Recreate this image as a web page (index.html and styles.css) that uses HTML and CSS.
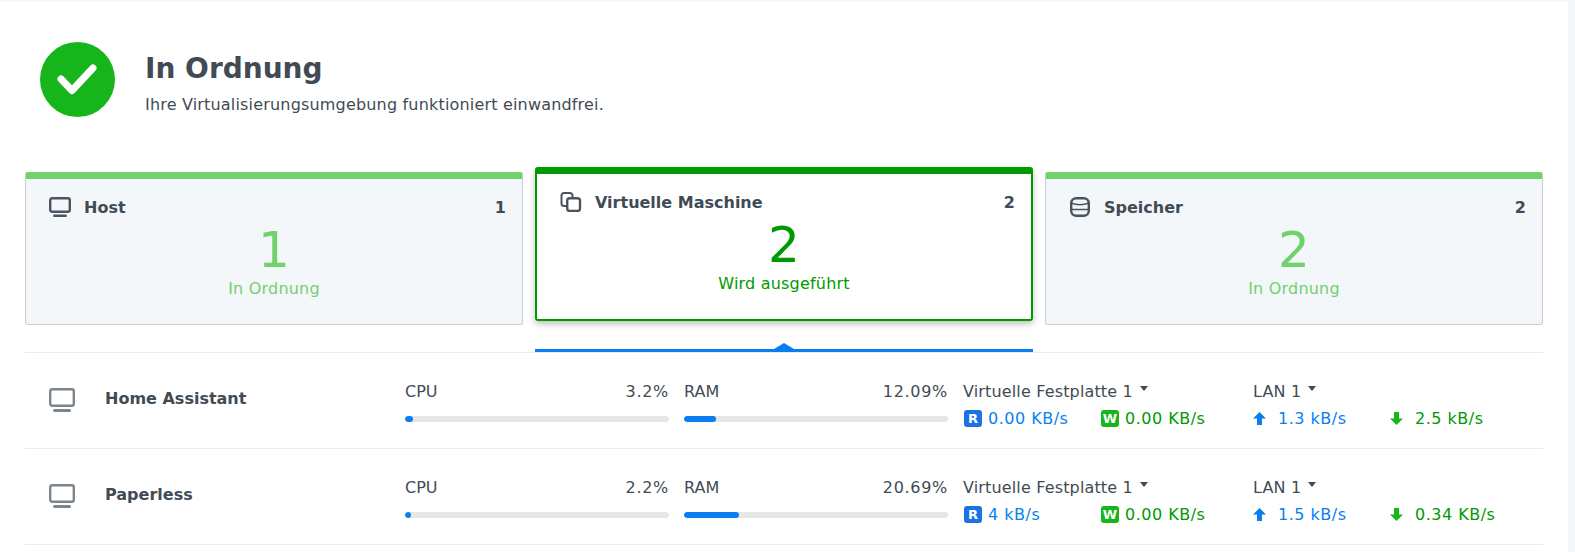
FILE: index.html
```html
<!DOCTYPE html>
<html lang="de">
  <head>
    <meta charset="UTF-8" />
    <title>Virtual Machine Manager</title>
    <link rel="stylesheet" href="styles.css">
  </head>
  <body>
    <div class="page">
      <header class="status">
        <svg class="status-icon" viewBox="0 0 75 75">
          <circle cx="37.5" cy="37.5" r="37.5" fill="#17b51c" />
          <path d="M21 37 L32 48.500 L53 26" fill="none" stroke="#fff" stroke-width="7" stroke-linecap="round" stroke-linejoin="round" />
        </svg>
        <div class="status-text">
          <h1>In Ordnung</h1>
          <p>Ihre Virtualisierungsumgebung funktioniert einwandfrei.</p>
        </div>
      </header>

      <section class="cards">
        <article class="card">
          <div class="card-head">
            <svg class="card-icon" viewBox="0 0 22 20">
              <rect x="1.200" y="1.200" width="19.600" height="13.600" rx="2" fill="none" stroke="#4a5460" stroke-width="2.400" />
              <rect x="4" y="17.500" width="14" height="2.500" rx="1.200" fill="#4a5460" />
            </svg>
            <span class="card-title">Host</span>
            <span class="card-count">1</span>
          </div>
          <div class="card-num">1</div>
          <div class="card-state">In Ordnung</div>
        </article>
        <article class="card card-active">
          <div class="card-head">
            <svg class="card-icon" viewBox="0 0 22 20">
              <path d="M6 14 H4 a2.500 2.500 0 0 1 -2.500 -2.500 V3.500 A2.500 2.500 0 0 1 4 1 H10 a2.500 2.500 0 0 1 2.500 2.500 V5" fill="none" stroke="#4a5460" stroke-width="2" />
              <rect x="7.200" y="6.200" width="12.800" height="12.800" rx="2.500" fill="none" stroke="#4a5460" stroke-width="2.400" />
            </svg>
            <span class="card-title">Virtuelle Maschine</span>
            <span class="card-count">2</span>
          </div>
          <div class="card-num">2</div>
          <div class="card-state">Wird ausgeführt</div>
        </article>
        <article class="card">
          <div class="card-head">
            <svg class="card-icon" viewBox="0 0 22 20">
              <rect x="2.200" y="1.200" width="17.600" height="17.600" rx="5" fill="none" stroke="#4a5460" stroke-width="2.400" />
              <path d="M2 6 Q11 9.500 20 6 M2 12.500 H20" fill="none" stroke="#4a5460" stroke-width="1.600" />
            </svg>
            <span class="card-title">Speicher</span>
            <span class="card-count">2</span>
          </div>
          <div class="card-num">2</div>
          <div class="card-state">In Ordnung</div>
        </article>
      </section>

      <div class="pointer-row">
        <div class="pointer"></div>
      </div>

      <section class="vm-list">
        <div class="vm">
          <svg class="vm-icon" viewBox="0 0 26 24">
            <rect x="1.200" y="1.200" width="23.600" height="16.600" rx="2" fill="none" stroke="#7c848c" stroke-width="2.400" />
            <rect x="4" y="21" width="18" height="3" rx="1.500" fill="#7c848c" />
          </svg>
          <div class="vm-name">Home Assistant</div>
          <div class="meter">
            <div class="meter-label"><span>CPU</span><span class="meter-value">3.2%</span></div>
            <div class="meter-track"><div class="meter-fill" style="width: 3.2%"></div></div>
          </div>
          <div class="meter">
            <div class="meter-label"><span>RAM</span><span class="meter-value">12.09%</span></div>
            <div class="meter-track"><div class="meter-fill" style="width: 12.09%"></div></div>
          </div>
          <div class="io io-disk">
            <div class="io-label">Virtuelle Festplatte 1<i class="caret"></i></div>
            <div class="io-rates">
              <span class="rate blue"><b class="badge badge-r">R</b>0.00 KB/s</span>
              <span class="rate green"><b class="badge badge-w">W</b>0.00 KB/s</span>
            </div>
          </div>
          <div class="io io-lan">
            <div class="io-label">LAN 1<i class="caret"></i></div>
            <div class="io-rates">
              <span class="rate blue"><svg class="arrow" viewBox="0 0 13 13"><path d="M6.500 0 L13 6.500 H9 V13 H4 V6.500 H0 Z" fill="#0a7ff0" /></svg>1.3 kB/s</span>
              <span class="rate green"><svg class="arrow" viewBox="0 0 13 13"><path d="M6.500 13 L13 6.500 H9 V0 H4 V6.500 H0 Z" fill="#17b51c" /></svg>2.5 kB/s</span>
            </div>
          </div>
        </div>
        <div class="vm">
          <svg class="vm-icon" viewBox="0 0 26 24">
            <rect x="1.200" y="1.200" width="23.600" height="16.600" rx="2" fill="none" stroke="#7c848c" stroke-width="2.400" />
            <rect x="4" y="21" width="18" height="3" rx="1.500" fill="#7c848c" />
          </svg>
          <div class="vm-name">Paperless</div>
          <div class="meter">
            <div class="meter-label"><span>CPU</span><span class="meter-value">2.2%</span></div>
            <div class="meter-track"><div class="meter-fill" style="width: 2.2%"></div></div>
          </div>
          <div class="meter">
            <div class="meter-label"><span>RAM</span><span class="meter-value">20.69%</span></div>
            <div class="meter-track"><div class="meter-fill" style="width: 20.69%"></div></div>
          </div>
          <div class="io io-disk">
            <div class="io-label">Virtuelle Festplatte 1<i class="caret"></i></div>
            <div class="io-rates">
              <span class="rate blue"><b class="badge badge-r">R</b>4 kB/s</span>
              <span class="rate green"><b class="badge badge-w">W</b>0.00 KB/s</span>
            </div>
          </div>
          <div class="io io-lan">
            <div class="io-label">LAN 1<i class="caret"></i></div>
            <div class="io-rates">
              <span class="rate blue"><svg class="arrow" viewBox="0 0 13 13"><path d="M6.500 0 L13 6.500 H9 V13 H4 V6.500 H0 Z" fill="#0a7ff0" /></svg>1.5 kB/s</span>
              <span class="rate green"><svg class="arrow" viewBox="0 0 13 13"><path d="M6.500 13 L13 6.500 H9 V0 H4 V6.500 H0 Z" fill="#17b51c" /></svg>0.34 KB/s</span>
            </div>
          </div>
        </div>
      </section>
    </div>
  </body>
</html>
```

FILE: styles.css
```css
* {
  margin: 0;
  box-sizing: border-box;
}

html,
body {
  height: 100%;
  overflow: hidden;
}

body {
  background: #f4f7fa;
  color: #414b55;
  font-family: "DejaVu Sans", sans-serif;
  font-size: 16px;
}

.page {
  width: 1568px;
  height: 100%;
  padding: 0 25px;
  background: #fff;
  border-top: 2px solid #f4f7fa;
}

/* status header */
.status {
  display: flex;
  align-items: center;
  gap: 30px;
  height: 75px;
  margin: 40px 0 55px 15px;
}

.status-icon {
  width: 75px;
  height: 75px;
}

.status-text {
  padding-top: 8px;
}

h1 {
  font-size: 28px;
  line-height: 34px;
  margin-bottom: 9px;
}

.status p {
  line-height: 20px;
  letter-spacing: 0.18px;
}

/* summary cards */
.cards {
  display: grid;
  grid-template-columns: repeat(3, 498px);
  gap: 12px;
  align-items: start;
}

.card {
  height: 153px;
  padding-top: 18px;
  background: #f4f7fa;
  border: 1px solid #c8ccd0;
  border-top: 7px solid #71d16a;
  border-radius: 3px;
  text-align: center;
  color: #71d16a;
}

.card-active {
  height: 154px;
  margin-top: -5px;
  background: #fff;
  border: 2px solid #009a00;
  border-top: 7px solid #009a00;
  color: #009a00;
  box-shadow: 0 3px 6px rgba(0, 0, 0, 0.25);
}

.card-head {
  display: flex;
  align-items: center;
  height: 20px;
  padding: 0 16px 0 23px;
  color: #414b55;
  font-weight: bold;
}

.card-icon {
  width: 22px;
  height: 20px;
  margin-right: 13px;
}

.card-count {
  margin-left: auto;
}

.card-num {
  font-size: 50px;
  line-height: 60px;
  margin-top: 3px;
}

.card-state {
  line-height: 20px;
  margin-top: -1px;
  letter-spacing: 0.2px;
}

/* blue pointer under the selected card */
.pointer-row {
  display: grid;
  grid-template-columns: repeat(3, 498px);
  gap: 12px;
  margin-top: 24px;
}

.pointer {
  grid-column: 2;
  position: relative;
  height: 3px;
  background: #0a7ef0;
}

.pointer::before {
  content: "";
  position: absolute;
  left: 239px;
  top: -6px;
  border: 10px solid transparent;
  border-top: 0;
  border-bottom: 6px solid #0a7ef0;
}

/* vm rows */
.vm-list {
  border-top: 1px solid #e8edf2;
}

.vm {
  display: flex;
  align-items: center;
  height: 96px;
  padding-left: 24px;
  border-bottom: 1px solid #e8edf2;
}

.vm-icon {
  width: 26px;
  height: 24px;
  flex: none;
  margin-bottom: 2px;
}

.vm-name {
  width: 330px;
  flex: none;
  padding-left: 30px;
  margin-bottom: 4px;
  font-weight: bold;
}

.meter {
  width: 264px;
  flex: none;
  margin-right: 15px;
  padding-top: 2px;
}

.meter-label {
  display: flex;
  justify-content: space-between;
  line-height: 20px;
  margin-bottom: 14px;
}

.meter-value {
  letter-spacing: 0.7px;
}

.meter-track {
  height: 6px;
  border-radius: 3px;
  background: #e4e6e8;
  overflow: hidden;
}

.meter-fill {
  height: 100%;
  border-radius: 3px;
  background: #0a7ef0;
}

.io {
  flex: none;
  padding-top: 8px;
}

.io-disk {
  width: 290px;
}

.io-label {
  line-height: 20px;
  margin-bottom: 8px;
  letter-spacing: 0.15px;
}

.caret {
  display: inline-block;
  margin-left: 7px;
  vertical-align: 6px;
  border: 4.500px solid transparent;
  border-bottom: 0;
  border-top: 5px solid #41494f;
}

.io-rates {
  display: grid;
  grid-template-columns: 137px 137px;
  line-height: 18px;
}

.io-disk .rate {
  padding-left: 1px;
}

.rate {
  display: flex;
  align-items: center;
  letter-spacing: 0.5px;
}

.blue {
  color: #0a7ff0;
}

.green {
  color: #009a00;
}

.badge {
  width: 18px;
  height: 17px;
  margin-right: 6px;
  border-radius: 3px;
  color: #fff;
  font-size: 13px;
  line-height: 17px;
  letter-spacing: 0;
  text-align: center;
}

.badge-r {
  background: #1a73e0;
}

.badge-w {
  background: #17b51c;
}

.arrow {
  width: 13px;
  height: 13px;
  margin-right: 12px;
}
```
